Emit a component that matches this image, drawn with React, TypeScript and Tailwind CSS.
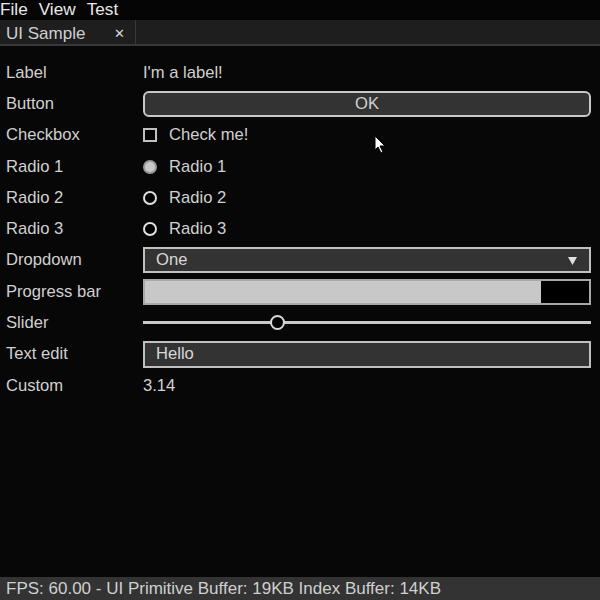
const labels = "font-['Liberation_Sans',Arial,sans-serif]";

const Row = ({ label, children }: { label: string; children: React.ReactNode }) => (
  <div className="flex items-center h-[31.3px]">
    <div className="w-[143px] pl-[6px] text-[#d0d0d0]">{label}</div>
    <div className="flex-1 flex items-center pr-[9px]">{children}</div>
  </div>
);

const Radio = ({ checked, text }: { checked?: boolean; text: string }) => (
  <div className="flex items-center">
    <div
      className={
        checked
          ? "w-[14px] h-[14px] rounded-full border-2 border-[#9a9a9a] bg-[#c8c8c8]"
          : "w-[14px] h-[14px] rounded-full border-2 border-[#e0e0e0] bg-black"
      }
    />
    <span className="ml-[12px] text-[#d0d0d0]">{text}</span>
  </div>
);

export default function App() {
  const progress = 0.891;
  return (
    <div className={`${labels} relative w-[600px] h-[600px] bg-[#070707] flex flex-col text-[16.6px] leading-[18px]`}>
      {/* menu bar */}
      <div className="h-[20px] flex items-start gap-[11px] text-[#e8e8e8] text-[17.2px] bg-[#050505]">
        <span>File</span>
        <span>View</span>
        <span>Test</span>
      </div>

      {/* tab bar */}
      <div className="h-[26px] flex bg-[#1e1e1e] border-b-2 border-[#383838]">
        <div className="w-[136px] flex items-center justify-between pl-[6px] pr-[10px] pt-[3px] border-r border-[#383838] text-[#d0d0d0]">
          <span className="text-[17px]">UI Sample</span>
          <span className="text-[13px] text-[#d8d8d8]">✕</span>
        </div>
      </div>

      {/* content */}
      <div className="flex-1 flex flex-col pt-[11px]">
        <Row label="Label">
          <span className="text-[#d0d0d0]">I'm a label!</span>
        </Row>
        <Row label="Button">
          <div className="w-full h-[26px] rounded-[6px] border-2 border-[#c8c8c8] bg-[#333333] flex items-center justify-center text-[#cfcfcf]">
            OK
          </div>
        </Row>
        <Row label="Checkbox">
          <div className="flex items-center">
            <div className="w-[14px] h-[14px] border-2 border-[#c0c0c0] bg-black" />
            <span className="ml-[12px] text-[#d0d0d0]">Check me!</span>
          </div>
        </Row>
        <Row label="Radio 1">
          <Radio checked text="Radio 1" />
        </Row>
        <Row label="Radio 2">
          <Radio text="Radio 2" />
        </Row>
        <Row label="Radio 3">
          <Radio text="Radio 3" />
        </Row>
        <Row label="Dropdown">
          <div className="w-full h-[26px] border-2 border-[#c0c0c0] bg-[#333333] flex items-center justify-between pl-[11px] pr-[12px] text-[#d8d8d8]">
            <span>One</span>
            <svg width="9" height="9" viewBox="0 0 9 9">
              <polygon points="0,1 9,1 4.5,9" fill="#e0e0e0" />
            </svg>
          </div>
        </Row>
        <Row label="Progress bar">
          <div className="w-full h-[26px] border-2 border-[#a8a8a8] bg-black flex">
            <div className="h-full bg-[#c8c8c8]" style={{ width: `${progress * 100}%` }} />
          </div>
        </Row>
        <Row label="Slider">
          <div className="relative w-full h-[16px] flex items-center -mt-[1px]">
            <div className="w-full h-[3px] bg-[#c8c8c8]" />
            <div className="absolute left-[127px] w-[15px] h-[15px] rounded-full border-2 border-[#d8d8d8] bg-black" />
          </div>
        </Row>
        <Row label="Text edit">
          <div className="w-full h-[27px] border-2 border-[#c0c0c0] bg-[#333333] flex items-center pl-[11px] text-[#d8d8d8]">
            Hello
          </div>
        </Row>
        <Row label="Custom">
          <span className="text-[#d0d0d0]">3.14</span>
        </Row>
      </div>

      {/* status bar */}
      <div className="h-[23px] bg-[#333333] flex items-center pl-[6px] text-[#cfcfcf] text-[17px]">
        FPS: 60.00 - UI Primitive Buffer: 19KB Index Buffer: 14KB
      </div>

      {/* mouse cursor */}
      <svg className="absolute left-[374px] top-[135px]" width="12" height="19" viewBox="0 0 12 19">
        <path d="M1 1 L1 15 L4 12 L7 18 L9 17 L6 11 L11 11 Z" fill="#ffffff" stroke="#000" strokeWidth="1" />
      </svg>
    </div>
  );
}
